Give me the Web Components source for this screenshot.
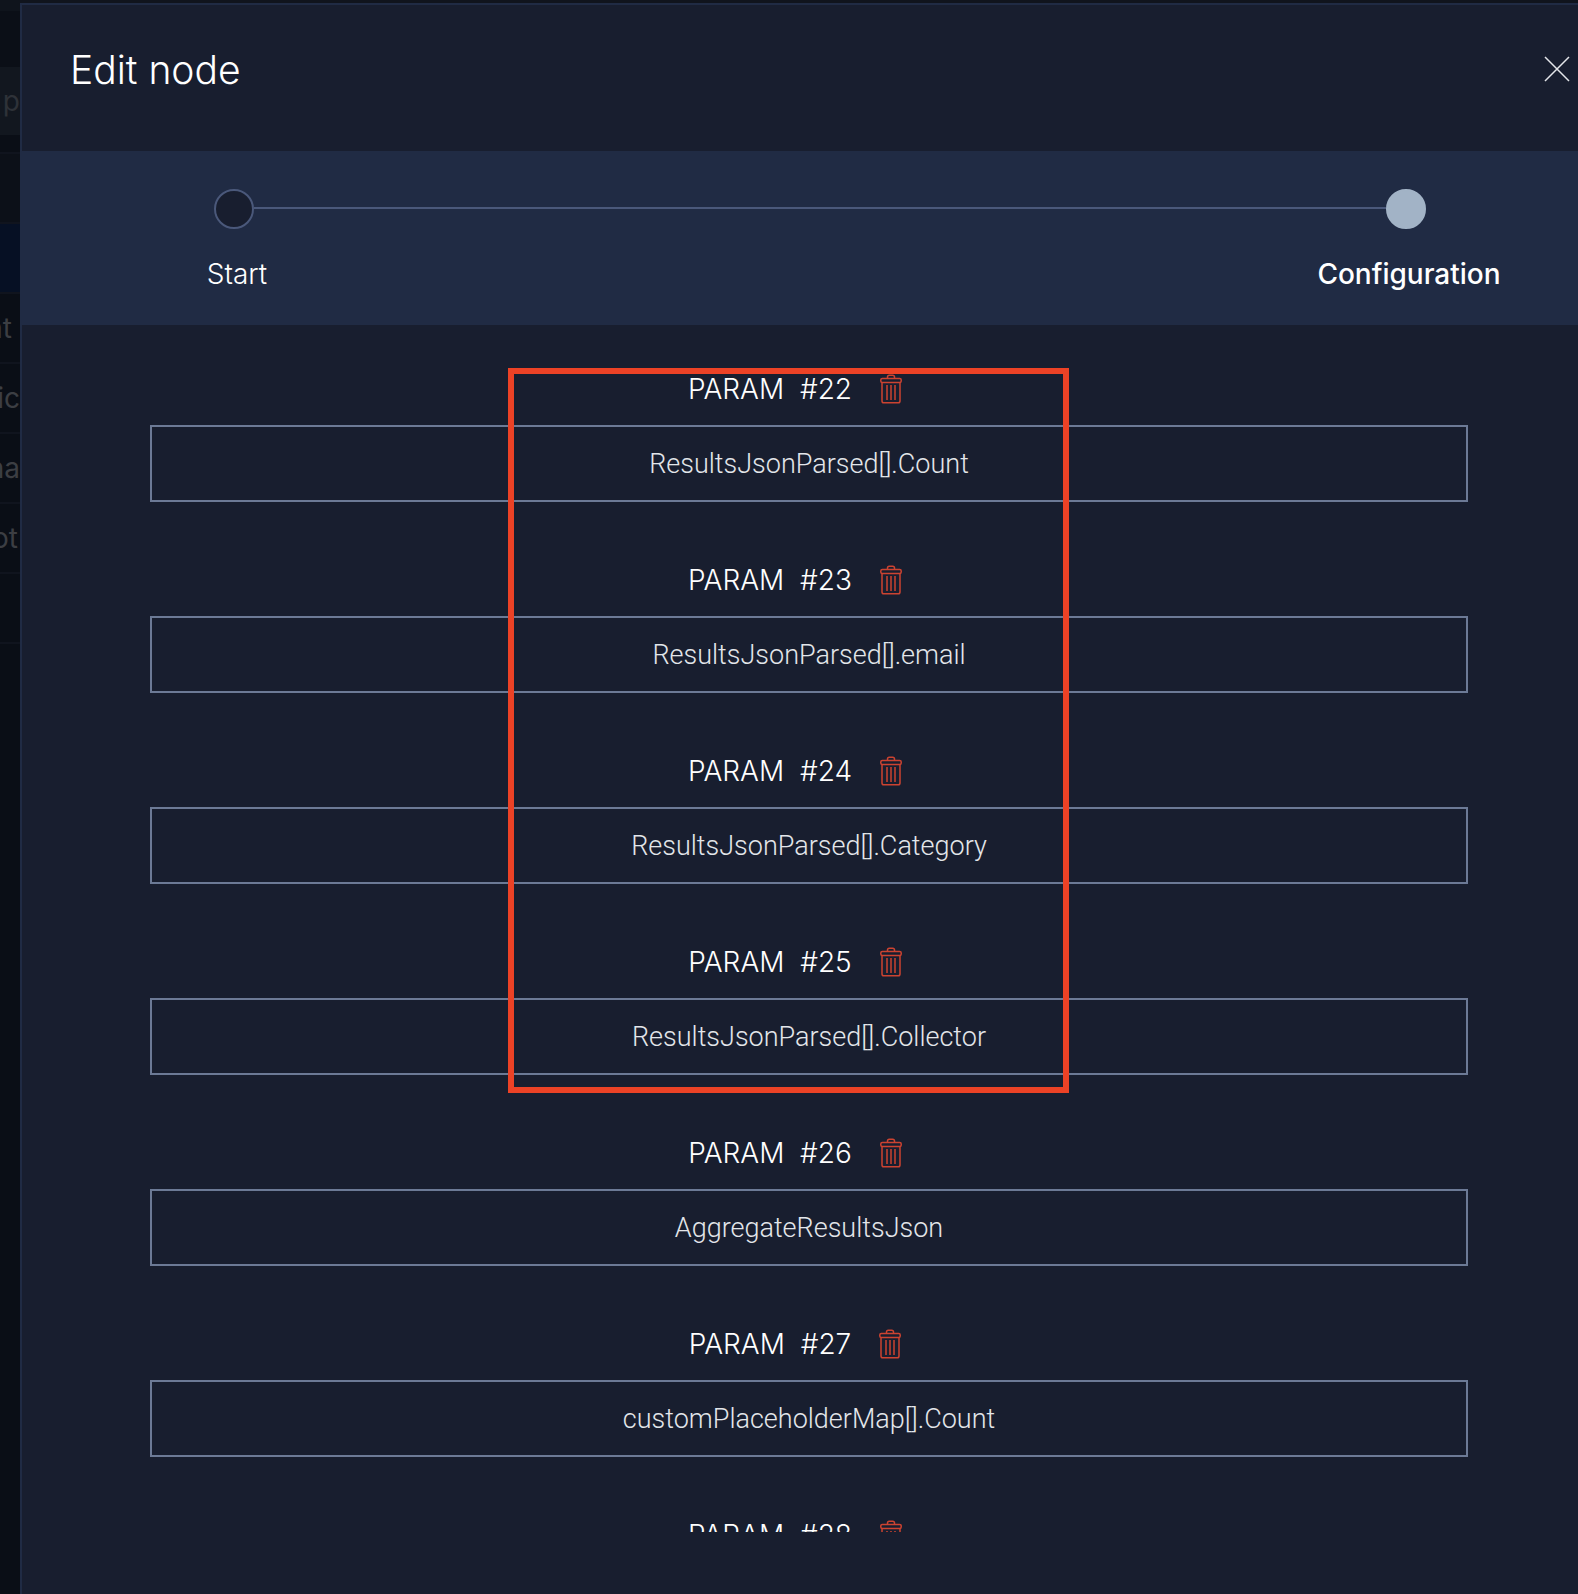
<!DOCTYPE html>
<html lang="en"><head><meta charset="utf-8"><title>Edit node</title>
<style>
html,body{margin:0;height:100%}
body{background:#0a0e16;font-family:Inter,"Liberation Sans",sans-serif;font-weight:300;color:#fff}
</style></head><body>
<app-shell>
  <backdrop-list slot="behind"></backdrop-list>
  <edit-dialog heading="Edit node">
    <step-bar slot="steps"></step-bar>
    <param-field number="22" value="ResultsJsonParsed[].Count"></param-field>
    <param-field number="23" value="ResultsJsonParsed[].email"></param-field>
    <param-field number="24" value="ResultsJsonParsed[].Category"></param-field>
    <param-field number="25" value="ResultsJsonParsed[].Collector"></param-field>
    <param-field number="26" value="AggregateResultsJson"></param-field>
    <param-field number="27" value="customPlaceholderMap[].Count"></param-field>
    <param-field number="28" value=""></param-field>
    <mark-frame slot="mark"></mark-frame>
  </edit-dialog>
</app-shell>
<script>
const define=(name,html,setup)=>customElements.define(name,class extends HTMLElement{
  connectedCallback(){
    if(this.shadowRoot)return;
    const t=document.createElement('template');t.innerHTML=html;
    this.attachShadow({mode:'open'}).append(t.content.cloneNode(true));
    if(setup)setup(this,this.shadowRoot);
  }
});

define('app-shell',`<style>
:host{display:flex;height:100vh;overflow:hidden;background:#10141d}
::slotted([slot=behind]){flex:0 0 20px}
main{flex:1;min-width:0;display:flex;padding-top:3px}
</style><slot name="behind"></slot><main><slot></slot></main>`);

define('backdrop-list',`<style>
:host{display:flex;flex-direction:column;overflow:hidden;background:#0a0e16;color:#3c3e43;font-size:28px;font-weight:400}
div{box-sizing:border-box;flex:none;height:70px;display:flex;align-items:center;justify-content:flex-end;border-bottom:2px solid #10141e}
.edge{height:11px;background:#0f141c;border:0}
.bar{height:56px;background:#0b0f17;border:0}
.search{height:68px;background:#12171f;border:0;color:#2e3238}
.gap{height:19px}
.head{background:#0c1018}
.on{background:#061024}
.inset{padding-right:8px}
.near{padding-right:2px}
</style><div class="edge"></div><div class="bar"></div><div class="search">p</div><div class="gap"></div>
<div class="head"></div><div class="on"></div><div class="inset">nt</div><div>ic</div><div>na</div><div class="near">ot</div><div></div>`);

define('edit-dialog',`<style>
:host{flex:1;min-width:0;box-sizing:border-box;display:flex;flex-direction:column;background:#181e2f;border:solid #202b44;border-width:2px 0 0 2px;padding-bottom:62px}
header{flex:none;box-sizing:border-box;height:146px;display:flex;align-items:flex-start;justify-content:space-between;padding:38px 7px 0 48px}
h1{margin:0;font-size:39px;line-height:54px;font-weight:300}
button{display:block;margin:12px 0 0;padding:0;border:0;background:none;width:28px;height:28px;cursor:pointer}
svg{display:block}
section{flex:1;min-height:0;overflow:hidden;padding:46px 110px 0 128px}
.list{position:relative;display:flex;flex-direction:column;gap:60px}
</style><header><h1></h1><button aria-label="Close"><svg width="28" height="28" viewBox="0 0 28 28" fill="none" stroke="#e4e6ea" stroke-width="1.5"><path d="M2 2L26 26M26 2L2 26"/></svg></button></header>
<slot name="steps"></slot><section><div class="list"><slot></slot><slot name="mark"></slot></div></section>`,
(el,root)=>{root.querySelector('h1').textContent=el.getAttribute('heading')});

define('step-bar',`<style>
:host{flex:none;box-sizing:border-box;display:flex;align-items:flex-start;height:174px;background:#202b44;padding:38px 80px 0 120px}
.step{flex:none;width:184px;display:flex;flex-direction:column;align-items:center;gap:26px;font-size:28px;line-height:38px}
i{position:relative;box-sizing:border-box;width:40px;height:40px;border-radius:50%;border:2px solid #4a587a;background:#181e2f}
.now i{border-color:#a2b3c6;background:#a2b3c6}
.now{font-weight:500}
.step span{padding-left:6px}
.line{flex:1;height:2px;margin:18px -72px 0;background:#4a587a}
</style><div class="step"><i></i><span>Start</span></div><div class="line"></div><div class="step now"><i></i><span>Configuration</span></div>`);

define('param-field',`<style>
:host{display:flex;flex-direction:column;gap:18px}
.top{display:flex;justify-content:center;align-items:center;height:36px}
label{font-size:28px;line-height:36px;white-space:pre}
button{border:0;background:none;padding:0 27px;cursor:pointer}
svg{display:block}
input{box-sizing:border-box;width:100%;height:77px;margin:0;padding:0 16px;border:2px solid #6c7a96;border-radius:0;background:none;color:#e3e6ea;font:300 27px Roboto,"Liberation Sans",sans-serif;text-align:center;outline:0}
</style><div class="top"><label for="value"></label><button aria-label="Delete parameter"><svg width="24" height="30" viewBox="0 0 24 30" fill="none" stroke="#cc4331" stroke-width="1.5"><path d="M8.500 4.500V3Q8.500 1.200 10.300 1.200H13.700Q15.500 1.200 15.500 3V4.500"/><rect x="1.800" y="4.500" width="20.400" height="4" rx="1.500"/><path d="M3 8.500V27Q3 28.800 4.800 28.800H19.200Q21 28.800 21 27V8.500M8 11V26M12 11V26M16 11V26"/></svg></button></div>
<input id="value" type="text">`,
(el,root)=>{
  root.querySelector('label').textContent='PARAM  #'+el.getAttribute('number');
  root.querySelector('input').value=el.getAttribute('value');
});

define('mark-frame',`<style>
:host{position:absolute;box-sizing:border-box;left:calc(50% - 301px);top:-3px;width:561px;height:725px;border:6px solid #ec4226;pointer-events:none}
</style>`);
</script></body></html>
